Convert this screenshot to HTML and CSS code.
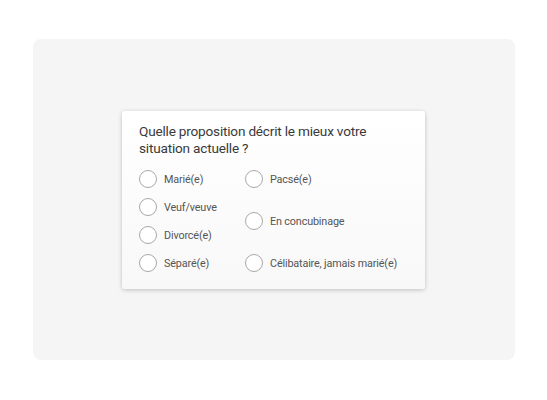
FILE: index.html
```html
<!DOCTYPE html>
<html lang="fr">
<head>
<meta charset="utf-8">
<link rel="stylesheet" href="styles.css">
</head>
<body>
<div class="page">
  <div class="panel">
    <div class="card">
      <h1 class="question">Quelle proposition décrit le mieux votre situation actuelle ?</h1>
      <div class="options">
        <label class="opt r1 c1"><span class="radio"></span><span class="lbl">Marié(e)</span></label>
        <label class="opt r2 c1"><span class="radio"></span><span class="lbl">Veuf/veuve</span></label>
        <label class="opt r3 c1"><span class="radio"></span><span class="lbl">Divorcé(e)</span></label>
        <label class="opt r4 c1"><span class="radio"></span><span class="lbl">Séparé(e)</span></label>
        <label class="opt r1 c2"><span class="radio"></span><span class="lbl">Pacsé(e)</span></label>
        <label class="opt r23 c2"><span class="radio"></span><span class="lbl">En concubinage</span></label>
        <label class="opt r4 c2"><span class="radio"></span><span class="lbl">Célibataire, jamais marié(e)</span></label>
      </div>
    </div>
  </div>
</div>
</body>
</html>
```

FILE: styles.css
```css
* { box-sizing: border-box; }
html, body { margin: 0; padding: 0; background: #ffffff; }
body { font-family: Roboto, "Noto Sans", "Liberation Sans", sans-serif; }
.page {
  width: 547px;
  height: 400px;
  padding: 39px 32px 40px 33px;
}
.panel {
  width: 482px;
  height: 321px;
  background: #f5f5f5;
  border-radius: 8px;
  padding-top: 72px;
  padding-left: 89px;
}
.card {
  width: 303px;
  height: 178px;
  background: linear-gradient(#ffffff, #f8f8f8);
  border-radius: 3px;
  box-shadow: 0 1px 4px rgba(0,0,0,0.22);
  padding: 12px 17px 0 17px;
}
.question {
  margin: 0;
  font-size: 13.6px;
  line-height: 17px;
  font-weight: 400;
  color: #3a3a3a;
  width: 250px;
  letter-spacing: -0.2px;
}
.options {
  margin-top: 8px;
  display: grid;
  grid-template-columns: 106px auto;
  grid-template-rows: repeat(4, 28px);
}
.opt { display: flex; align-items: center; }
.r1 { grid-row: 1; }
.r2 { grid-row: 2; }
.r3 { grid-row: 3; }
.r4 { grid-row: 4; }
.r23 { grid-row: 2 / span 2; }
.c1 { grid-column: 1; }
.c2 { grid-column: 2; }
.radio {
  width: 18px;
  height: 18px;
  border: 1px solid #a9a9a9;
  border-radius: 50%;
  background: #ffffff;
  flex: none;
}
.lbl {
  margin-left: 7px;
  font-size: 10.8px;
  color: #555555;
  letter-spacing: -0.15px;
}
```
